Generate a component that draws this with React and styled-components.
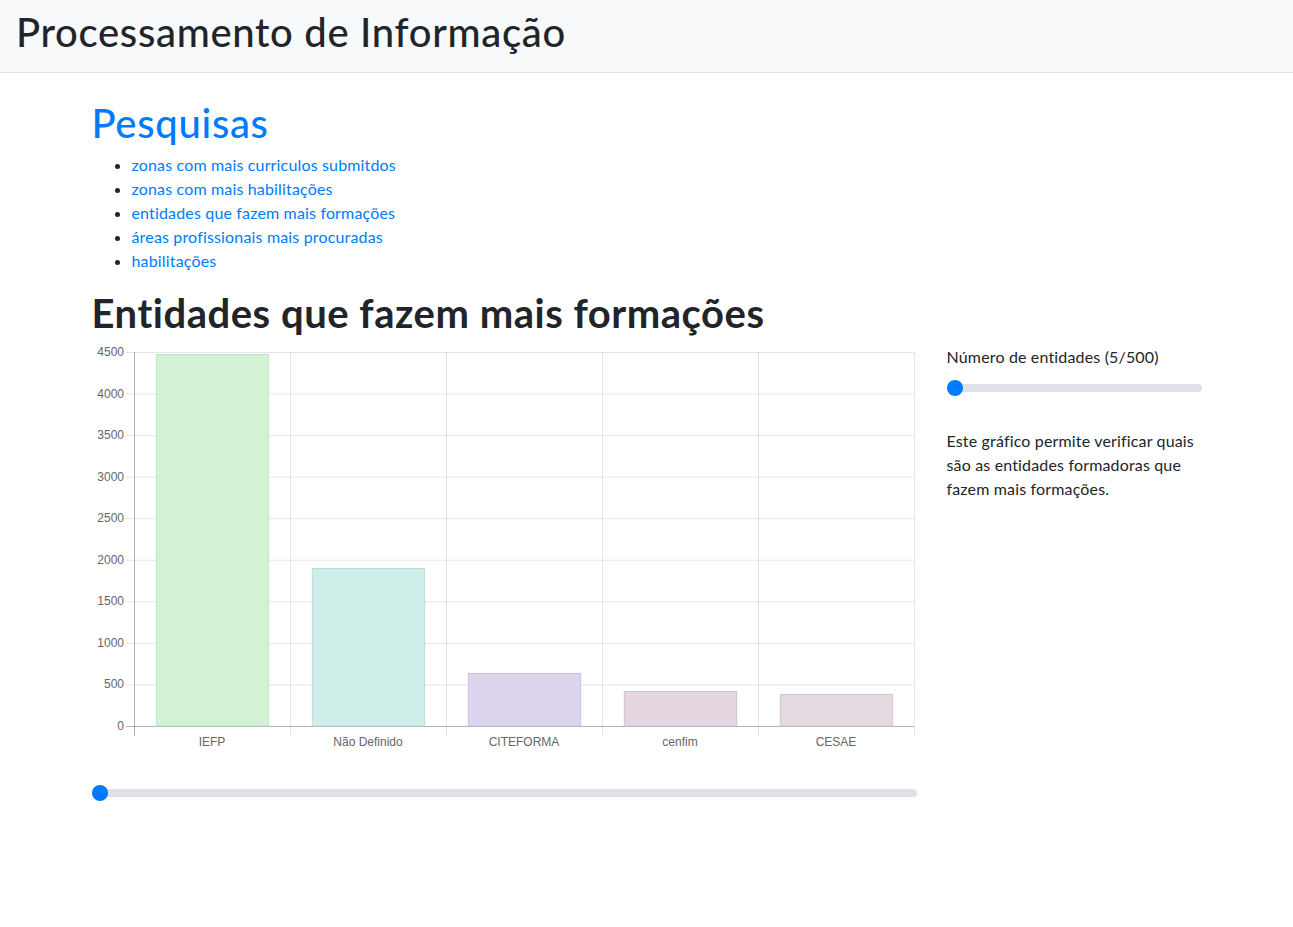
import React from 'react';
import styled, { createGlobalStyle } from 'styled-components';

const GlobalStyle = createGlobalStyle`
  body {
    margin: 0;
    font-family: Lato, "Open Sans", sans-serif;
    font-size: 16px;
    line-height: 1.5;
    letter-spacing: 0.01em;
    color: #212529;
    background: #fff;
  }
  * {
    box-sizing: border-box;
  }
`;

const Navbar = styled.nav`
  background-color: #f8f9fa;
  border-bottom: 1px solid #dee2e6;
  padding: 8px 16px;
`;

const Brand = styled.h1`
  margin: 0 0 8px;
  font-size: 40px;
  font-weight: 500;
  line-height: 48px;
  letter-spacing: 0.017em;
  color: #212529;
`;

const Container = styled.div`
  max-width: 1140px;
  margin: 0 auto;
  padding: 26px 15px 0;
`;

const Title = styled.h1`
  margin: 0 0 6px;
  font-size: 40px;
  font-weight: 500;
  line-height: 48px;
  letter-spacing: 0.017em;
  color: #007bff;
`;

const LinkList = styled.ul`
  margin: 0 0 16px;
  padding-left: 40px;
`;

const LinkItem = styled.li`
  line-height: 24px;
`;

const Link = styled.a`
  color: #007bff;
  text-decoration: none;
`;

const SectionTitle = styled.h2`
  margin: 0 0 8px;
  font-size: 40px;
  font-weight: 700;
  line-height: 48px;
  letter-spacing: 0.013em;
`;

const Row = styled.div`
  display: flex;
  margin: 0 -15px;
`;

const Col = styled.div`
  flex: 0 0 ${(p) => p.size}%;
  max-width: ${(p) => p.size}%;
  padding: 0 15px;
`;

const Range = styled.input.attrs({ type: 'range' })`
  display: block;
  width: 100%;
  height: 22px;
  margin: ${(p) => p.spacing || '0'};
  padding: 0;
  background: transparent;
  appearance: none;
  -webkit-appearance: none;

  &:focus {
    outline: none;
  }

  &::-webkit-slider-runnable-track {
    height: 8px;
    border-radius: 16px;
    background-color: #dee2e6;
  }

  &::-webkit-slider-thumb {
    -webkit-appearance: none;
    width: 16px;
    height: 16px;
    margin-top: -4px;
    border: 0;
    border-radius: 50%;
    background-color: #007bff;
  }

  &::-moz-range-track {
    height: 8px;
    border-radius: 16px;
    background-color: #dee2e6;
  }

  &::-moz-range-thumb {
    width: 16px;
    height: 16px;
    border: 0;
    border-radius: 50%;
    background-color: #007bff;
  }
`;

const Label = styled.label`
  display: block;
  line-height: 24px;
`;

const Description = styled.p`
  margin: 30px 0 0;
  line-height: 24px;
`;

const ChartSvg = styled.svg`
  display: block;
  width: 100%;
  height: 410px;
  overflow: visible;
  font-family: "Liberation Sans", Arial, sans-serif;
  font-size: 12px;
  letter-spacing: 0;
`;

const links = [
  'zonas com mais curriculos submitdos',
  'zonas com mais habilitações',
  'entidades que fazem mais formações',
  'áreas profissionais mais procuradas',
  'habilitações',
];

const entities = [
  { label: 'IEFP', value: 4476, fill: '#d2f2d6', stroke: '#bfe3c3' },
  { label: 'Não Definido', value: 1901, fill: '#cfeeea', stroke: '#b9ddd7' },
  { label: 'CITEFORMA', value: 638, fill: '#ddd4ed', stroke: '#cbbfdf' },
  { label: 'cenfim', value: 421, fill: '#e5d7e1', stroke: '#d2c1cd' },
  { label: 'CESAE', value: 385, fill: '#e5d9e1', stroke: '#d4c6d0' },
];

const BarChart = ({ data }) => {
  const left = 42;
  const right = 822;
  const top = 7;
  const zero = 381;
  const max = 4500;
  const ticks = [0, 500, 1000, 1500, 2000, 2500, 3000, 3500, 4000, 4500];
  const cat = (right - left) / data.length;
  const barW = cat * 0.72;
  const y = (v) => zero - ((zero - top) * v) / max;

  return (
    <ChartSvg viewBox="0 0 825 410">
      {ticks.map((t) => (
        <g key={t}>
          <line
            x1={left - 8}
            x2={right}
            y1={y(t) + 0.5}
            y2={y(t) + 0.5}
            stroke={t === 0 ? 'rgba(0,0,0,0.3)' : 'rgba(0,0,0,0.1)'}
          />
          <text x={left - 10} y={y(t) + 4} textAnchor="end" fill="#666">
            {t}
          </text>
        </g>
      ))}
      {data.map((d, i) => (
        <line
          key={`v${i}`}
          x1={left + cat * (i + 1) + 0.5}
          x2={left + cat * (i + 1) + 0.5}
          y1={top}
          y2={zero + 10}
          stroke="rgba(0,0,0,0.1)"
        />
      ))}
      <line x1={left + 0.5} x2={left + 0.5} y1={top} y2={zero + 10} stroke="rgba(0,0,0,0.3)" />
      {data.map((d, i) => {
        const x = left + cat * i + (cat - barW) / 2;
        return (
          <g key={d.label}>
            <rect
              x={x + 0.5}
              y={y(d.value) + 0.5}
              width={barW}
              height={zero - y(d.value) - 0.5}
              fill={d.fill}
              stroke={d.stroke}
            />
            <text x={left + cat * i + cat / 2} y={zero + 20} textAnchor="middle" fill="#666">
              {d.label}
            </text>
          </g>
        );
      })}
    </ChartSvg>
  );
};

const App = () => (
  <>
    <GlobalStyle />
    <Navbar>
      <Brand>Processamento de Informação</Brand>
    </Navbar>
    <Container>
      <Title>Pesquisas</Title>
      <LinkList>
        {links.map((l) => (
          <LinkItem key={l}>
            <Link href="#">{l}</Link>
          </LinkItem>
        ))}
      </LinkList>
      <SectionTitle>Entidades que fazem mais formações</SectionTitle>
      <Row>
        <Col size={75}>
          <BarChart data={entities} />
          <Range min={5} max={500} defaultValue={5} spacing="27px 0 0" />
        </Col>
        <Col size={25}>
          <Label>Número de entidades (5/500)</Label>
          <Range min={5} max={500} defaultValue={5} spacing="8px 0 0" />
          <Description>
            Este gráfico permite verificar quais são as entidades formadoras que fazem mais formações.
          </Description>
        </Col>
      </Row>
    </Container>
  </>
);

export default App;
